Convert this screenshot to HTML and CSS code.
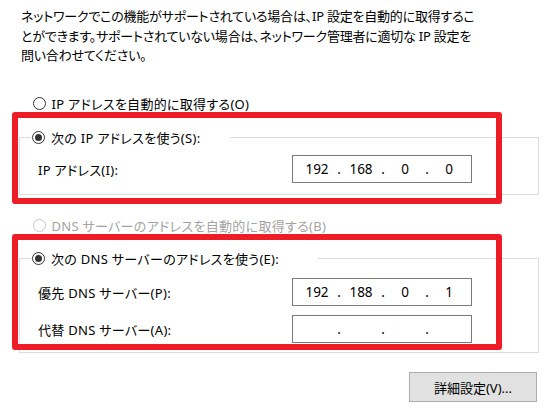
FILE: index.html
```html
<!DOCTYPE html>
<html lang="ja">
<head>
<meta charset="utf-8">
<title>IP 設定</title>
<link rel="stylesheet" href="styles.css">
</head>
<body>
<div class="page">
  <p class="intro">ネットワークでこの機能がサポートされている場合は、IP 設定を自動的に取得するこ<br>とができます。サポートされていない場合は、ネットワーク管理者に適切な IP 設定を<br>問い合わせてください。</p>

  <div class="opt opt-first"><span class="radio"></span><span>IP アドレスを自動的に取得する(O)</span></div>

  <fieldset class="group group-ip">
    <legend class="legend legend-ip"><span class="legend-inner"><span class="radio on"></span><span>次の IP アドレスを使う(S):</span></span></legend>
    <div class="field">
      <span class="field-label">IP アドレス(I):</span>
      <div class="ipbox"><span class="seg">192</span><span class="dot">.</span><span class="seg">168</span><span class="dot">.</span><span class="seg">0</span><span class="dot">.</span><span class="seg">0</span></div>
    </div>
  </fieldset>

  <div class="opt opt-disabled"><span class="radio off"></span><span>DNS サーバーのアドレスを自動的に取得する(B)</span></div>

  <fieldset class="group group-dns">
    <legend class="legend legend-dns"><span class="legend-inner"><span class="radio on"></span><span>次の DNS サーバーのアドレスを使う(E):</span></span></legend>
    <div class="field">
      <span class="field-label">優先 DNS サーバー(P):</span>
      <div class="ipbox"><span class="seg">192</span><span class="dot">.</span><span class="seg">188</span><span class="dot">.</span><span class="seg">0</span><span class="dot">.</span><span class="seg">1</span></div>
    </div>
    <div class="field field-next">
      <span class="field-label">代替 DNS サーバー(A):</span>
      <div class="ipbox"><span class="seg"></span><span class="dot">.</span><span class="seg"></span><span class="dot">.</span><span class="seg"></span><span class="dot">.</span><span class="seg"></span></div>
    </div>
  </fieldset>

  <div class="actions"><button class="btn" type="button">詳細設定(V)...</button></div>

  <div class="mark mark-ip"></div>
  <div class="mark mark-dns"></div>
</div>
</body>
</html>
```

FILE: styles.css
```css
html, body {
  margin: 0;
  background: #fff;
}

body {
  font-family: "Noto Sans", "Noto Sans CJK JP", sans-serif;
  font-size: 13px;
  color: #000;
  font-feature-settings: "palt";
}

.page {
  position: relative;
  width: 549px;
  height: 415px;
  padding: 7px 0 0 21px;
  box-sizing: border-box;
  overflow: hidden;
}

.intro {
  margin: 0;
  line-height: 19.5px;
  white-space: nowrap;
  letter-spacing: -0.22px;
}

.opt {
  display: flex;
  align-items: center;
  gap: 6px;
  height: 20px;
  margin-left: 11.5px;
  white-space: nowrap;
  letter-spacing: 0.3px;
}

.opt-first {
  margin-top: 27.5px;
}

.opt-disabled {
  margin-top: 20px;
  color: #a3a3a3;
}

.radio {
  flex: none;
  width: 13px;
  height: 13px;
  box-sizing: border-box;
  border: 1px solid #333;
  border-radius: 50%;
  background: #fff;
  position: relative;
}

.radio.on::after {
  content: "";
  position: absolute;
  left: 2px;
  top: 2px;
  width: 7px;
  height: 7px;
  border-radius: 50%;
  background: #333;
}

.radio.off {
  border-color: #c6c6c6;
}

.group {
  margin: 14px 0 0 -2px;
  width: 520px;
  box-sizing: border-box;
  border: 1px solid #dcdcdc;
  padding: 8px 0 11px 11px;
  min-width: 0;
}

.group-dns {
  margin-top: 13px;
  padding-top: 10px;
  padding-bottom: 9px;
}

.legend {
  padding: 0 0 0 1px;
  height: 20px;
  box-sizing: border-box;
  white-space: nowrap;
  letter-spacing: 0.3px;
}

.legend-ip {
  width: 199px;
}

.legend-dns {
  width: 287px;
}

.legend-inner {
  display: flex;
  align-items: center;
  gap: 6px;
  height: 20px;
}

.field {
  display: flex;
  align-items: center;
  margin-left: 7px;
  height: 28px;
}

.field-next {
  margin-top: 9px;
}

.field-label {
  width: 254px;
  flex: none;
  white-space: nowrap;
  letter-spacing: 0.3px;
}

.ipbox {
  display: flex;
  align-items: center;
  width: 180px;
  height: 28px;
  box-sizing: border-box;
  border: 1px solid #7a7a7a;
  padding-left: 5px;
  font-family: "Noto Sans", sans-serif;
  font-size: 13.5px;
  background: #fff;
}

.seg {
  width: 38px;
  text-align: center;
}

.dot {
  width: 6px;
  text-align: center;
}

.actions {
  margin-top: 19px;
  padding-left: 388px;
}

.btn {
  width: 128px;
  height: 30px;
  box-sizing: border-box;
  border: 1px solid #adadad;
  background: #e1e1e1;
  font-family: "Noto Sans", "Noto Sans CJK JP", sans-serif;
  font-size: 13px;
  color: #000;
  padding: 0;
  margin: 0;
  font-feature-settings: "palt";
}

.mark {
  position: absolute;
  left: 12px;
  width: 490px;
  box-sizing: border-box;
  border: 6px solid #ee1c25;
  border-radius: 3px;
  pointer-events: none;
}

.mark-ip {
  top: 112px;
  height: 92px;
}

.mark-dns {
  top: 234px;
  height: 116px;
}
```
